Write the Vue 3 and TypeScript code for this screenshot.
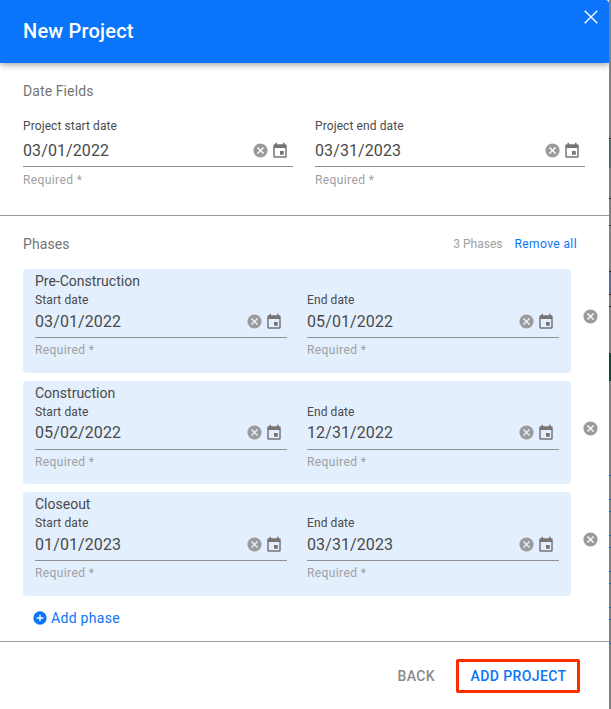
<script setup lang="ts">
interface Phase { name: string; start: string; end: string }
interface Mark { y: number; h: number; c: string }
const phases: Phase[] = [
  { name: 'Pre-Construction', start: '03/01/2022', end: '05/01/2022' },
  { name: 'Construction', start: '05/02/2022', end: '12/31/2022' },
  { name: 'Closeout', start: '01/01/2023', end: '03/31/2023' },
]
const xPath = 'M12 2a10 10 0 1 0 0 20 10 10 0 0 0 0-20zm5 13.59L15.59 17 12 13.41 8.41 17 7 15.59 10.59 12 7 8.41 8.41 7 12 10.59 15.59 7 17 8.41 13.41 12 17 15.59z'
const calPath = 'M17 12h-5v5h5v-5zM16 1v2H8V1H6v2H5c-1.11 0-1.99.9-1.99 2L3 19a2 2 0 0 0 2 2h14a2 2 0 0 0 2-2V5a2 2 0 0 0-2-2h-1V1h-2zm3 18H5V8h14v11z'

const marks: Mark[] = [
  { y: 138, h: 1, c: '#222' }, { y: 140, h: 28, c: '#4e6a64' },
  { y: 198, h: 1, c: '#222' }, { y: 225, h: 1, c: '#333' },
  { y: 271, h: 1, c: '#222' }, { y: 272, h: 22, c: '#5a7090' }, { y: 294, h: 1, c: '#222' },
  { y: 306, h: 1, c: '#222' }, { y: 353, h: 28, c: '#0b4a34' },
  ...[475, 499, 511, 535, 547, 571, 583, 607, 619, 643].map((y) => ({ y, h: 1, c: '#1a56a8' })),
]
const segments = marks.map((m, i) => ({
  y: m.y,
  gap: m.y - (i ? marks[i - 1].y + marks[i - 1].h : 0),
  h: m.h,
  c: m.c,
}))
</script>

<template>
  <div class="page">
    <div class="dialog">
      <header class="head">
        <h1>New Project</h1>
        <svg class="close" viewBox="0 0 14 14"><path d="M.7.7l12.6 12.6M13.3.7L.7 13.3" stroke="#fff" stroke-width="1.4" fill="none" /></svg>
      </header>

      <section class="dates">
        <div class="section-title">Date Fields</div>
        <div class="row top-row">
          <div class="field">
            <label>Project start date</label>
            <div class="input"><span>03/01/2022</span>
              <svg class="ic-x" viewBox="0 0 24 24"><path :d="xPath" /></svg>
              <svg class="ic-cal" viewBox="0 0 24 24"><path :d="calPath" /></svg>
            </div>
            <div class="help">Required *</div>
          </div>
          <div class="field">
            <label>Project end date</label>
            <div class="input"><span>03/31/2023</span>
              <svg class="ic-x" viewBox="0 0 24 24"><path :d="xPath" /></svg>
              <svg class="ic-cal" viewBox="0 0 24 24"><path :d="calPath" /></svg>
            </div>
            <div class="help">Required *</div>
          </div>
        </div>
      </section>

      <section class="phases">
        <div class="phases-head">
          <span class="section-title">Phases</span>
          <span class="count">3 Phases</span>
          <a class="remove">Remove all</a>
        </div>
        <div v-for="p in phases" :key="p.name" class="phase-line">
          <div class="card">
            <div class="name">{{ p.name }}</div>
            <div class="row card-row">
              <div class="field">
                <label>Start date</label>
                <div class="input"><span>{{ p.start }}</span>
                  <svg class="ic-x" viewBox="0 0 24 24"><path :d="xPath" /></svg>
                  <svg class="ic-cal" viewBox="0 0 24 24"><path :d="calPath" /></svg>
                </div>
                <div class="help">Required *</div>
              </div>
              <div class="field">
                <label>End date</label>
                <div class="input"><span>{{ p.end }}</span>
                  <svg class="ic-x" viewBox="0 0 24 24"><path :d="xPath" /></svg>
                  <svg class="ic-cal" viewBox="0 0 24 24"><path :d="calPath" /></svg>
                </div>
                <div class="help">Required *</div>
              </div>
            </div>
          </div>
          <svg class="ic-x remove-phase" viewBox="0 0 24 24"><path :d="xPath" /></svg>
        </div>
        <div class="add">
          <svg viewBox="0 0 24 24"><path fill="#0a75fb" d="M12 2a10 10 0 1 0 0 20 10 10 0 0 0 0-20zm5 11h-4v4h-2v-4H7v-2h4V7h2v4h4v2z" /></svg>
          <span>Add phase</span>
        </div>
      </section>

      <footer class="foot">
        <span class="back">BACK</span>
        <span class="submit">ADD PROJECT</span>
      </footer>
    </div>
    <div class="strip">
      <i v-for="s in segments" :key="s.y" :style="{ marginTop: s.gap + 'px', height: s.h + 'px', background: s.c }" />
    </div>
  </div>
</template>

<style>
html, body { margin: 0; background: #808080; }
</style>

<style scoped>
.page { display: flex; width: 611px; height: 709px; overflow: hidden; }
.strip { width: 2px; flex: none; background: #808080; display: flex; flex-direction: column; }
.strip i { display: block; flex: none; }
.dialog {
  width: 609px;
  flex: none;
  height: 709px;
  background: #fff;
  font-family: Roboto, sans-serif;
  color: #4a4a4a;
  box-sizing: border-box;
  overflow: hidden;
}
.head {
  height: 63px;
  background: #0a75fb;
  display: flex;
  align-items: flex-start;
  justify-content: space-between;
  padding: 0 11px 0 23px;
  box-shadow: 0 2px 6px rgba(0, 0, 0, 0.35);
  border-top-right-radius: 4px;
  position: relative;
}
.head h1 { margin: 0; color: #fff; font-size: 20px; font-weight: 500; line-height: 63px; letter-spacing: 0.2px; }
.close { width: 14px; height: 14px; margin-top: 10px; }
.dates { height: 153px; padding: 20px 24px 0 23px; box-sizing: border-box; border-bottom: 1px solid #9b9b9b; }
.section-title { font-size: 14px; line-height: 16px; color: #757575; letter-spacing: 0.1px; }
.row { display: flex; }
.top-row { margin-top: 20px; gap: 22px; }
.field { flex: 1; min-width: 0; }
label { display: block; font-size: 12px; line-height: 14px; color: #4a4a4a; letter-spacing: 0.1px; }
.input {
  display: flex;
  align-items: center;
  height: 26px;
  margin-top: 4px;
  padding: 0 4px 3px 0;
  border-bottom: 1px solid #8f8f8f;
  font-size: 16px;
  letter-spacing: 0.1px;
}
.input span { flex: 1; }
.ic-x { width: 17px; height: 17px; fill: #9b9b9b; flex: none; }
.ic-cal { width: 18px; height: 18px; fill: #757575; margin: 1px 0 0 2px; flex: none; }
.help { margin-top: 6px; font-size: 12px; line-height: 14px; color: #a0a0a0; letter-spacing: 0.4px; }
.phases { height: 426px; padding: 20px 0 0 23px; box-sizing: border-box; border-bottom: 1px solid #9b9b9b; }
.phases-head { display: flex; align-items: center; height: 16px; padding-right: 32px; margin-bottom: 17px; }
.phases-head .section-title { flex: 1; }
.count { font-size: 12px; color: #a0a0a0; }
.remove { font-size: 12px; color: #0a75fb; margin-left: 12px; letter-spacing: 0.4px; }
.phase-line { display: flex; align-items: flex-start; margin-bottom: 8px; }
.card {
  width: 548px;
  height: 103.5px;
  box-sizing: border-box;
  background: #e3effd;
  border-radius: 4px;
  padding: 4px 12px 0;
}
.name { font-size: 14px; line-height: 16px; }
.card-row { gap: 20px; margin-top: 4px; }
.card-row .input { margin-top: 1px; }
.card-row .help { margin-top: 5px; }
.remove-phase { margin: 39px 0 0 11px; }
.add { display: flex; align-items: center; gap: 3px; margin: 14.5px 0 0 9px; height: 16px; color: #0a75fb; font-size: 14px; letter-spacing: 0.3px; }
.add svg { width: 16px; height: 16px; flex: none; }
.foot {
  height: 67px;
  display: flex;
  align-items: center;
  justify-content: flex-end;
  padding: 1px 29px 0 0;
  box-sizing: border-box;
  font-size: 14px;
  font-weight: 500;
  letter-spacing: 0.4px;
}
.back { color: #8a8a8a; margin-right: 21px; }
.submit {
  color: #0a75fb;
  width: 124px;
  height: 34px;
  box-sizing: border-box;
  padding-left: 1px;
  line-height: 28px;
  text-align: center;
  border: 3px solid #fb2c00;
  border-radius: 2px;
}
</style>
